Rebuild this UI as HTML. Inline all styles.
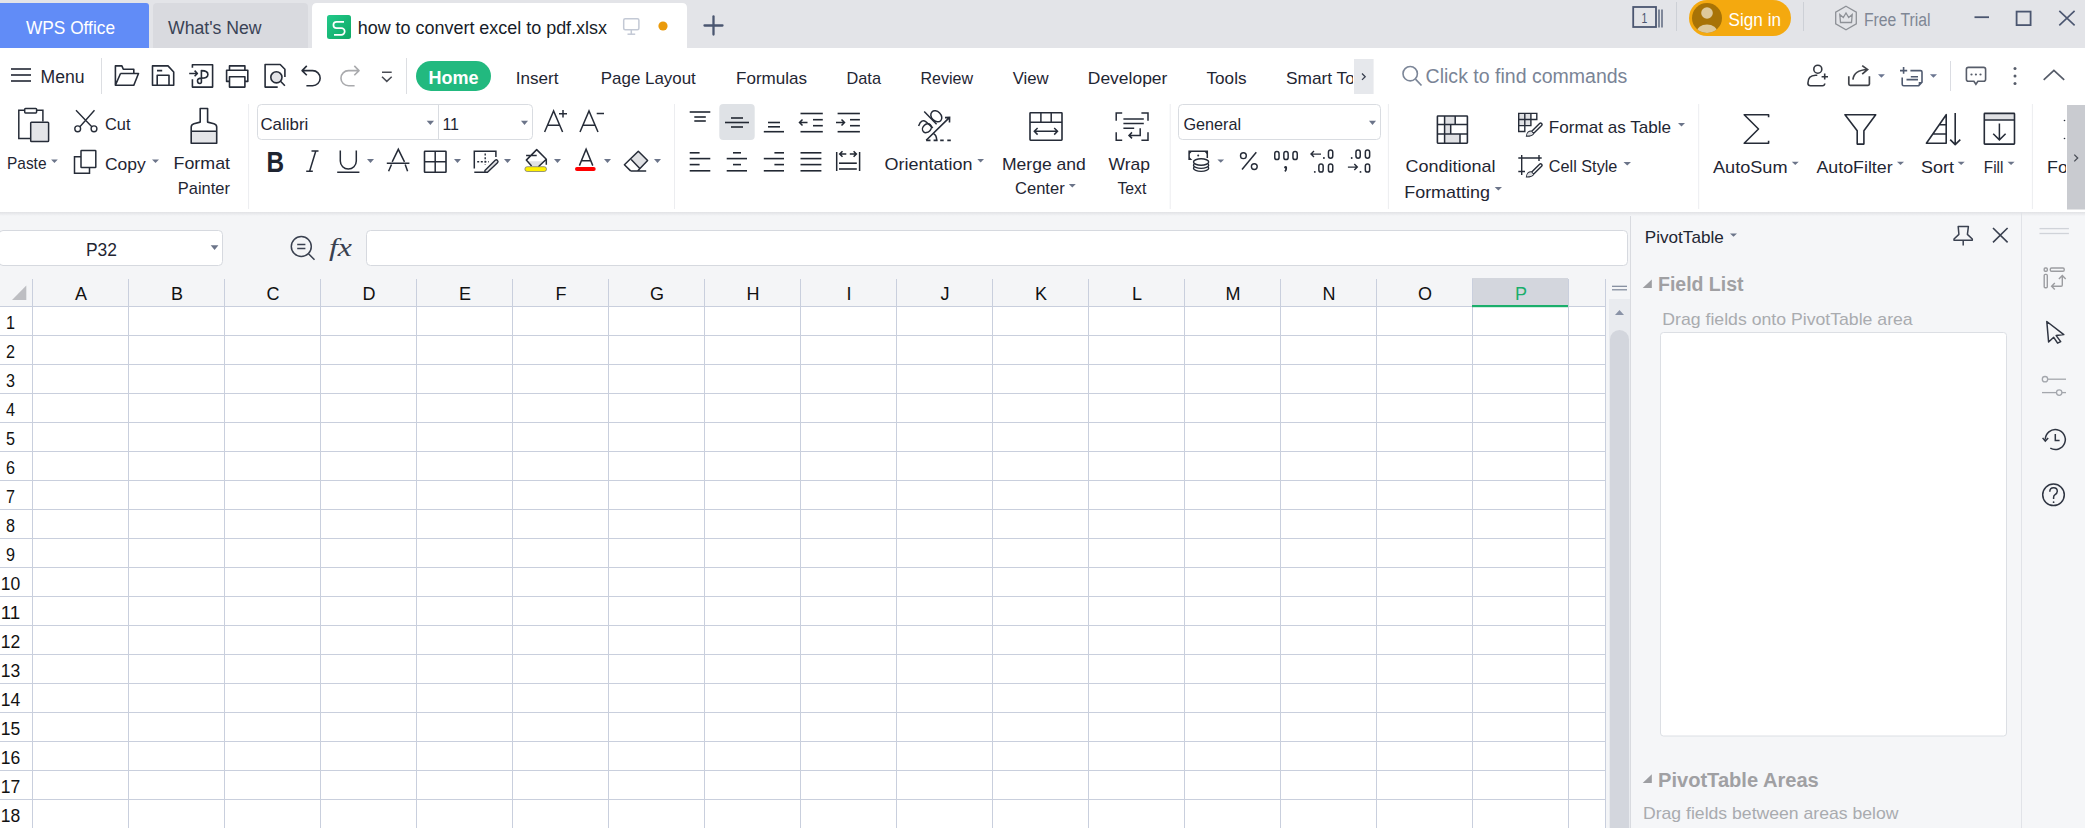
<!DOCTYPE html>
<html><head><meta charset="utf-8"><title>WPS Spreadsheet</title>
<style>html,body{margin:0;padding:0;background:#fff;overflow:hidden}svg{display:block;font-family:"Liberation Sans",sans-serif}</style>
</head><body>
<svg width="2085" height="828" viewBox="0 0 2085 828">
<rect x="0" y="0" width="2085" height="48" fill="#E3E4E8" />
<path d="M0,3H146Q149,3 149,6V48H0Z" fill="#618CF7" />
<text x="26" y="34" font-size="18" fill="#FFFFFF" textLength="89" lengthAdjust="spacingAndGlyphs" >WPS Office</text>
<path d="M153,48V7Q153,3 157,3H304Q308,3 308,7V48Z" fill="#D9DADF" />
<text x="168" y="34" font-size="18" fill="#3A4356" textLength="93.5" lengthAdjust="spacingAndGlyphs" >What&#x27;s New</text>
<path d="M312,48V8Q312,3 317,3H682Q687,3 687,8V48Z" fill="#FFFFFF" />
<defs><linearGradient id="gS" x1="0" y1="0" x2="1" y2="1"><stop offset="0" stop-color="#22C98A"/><stop offset="1" stop-color="#0FA865"/></linearGradient><clipPath id="cAv"><circle cx="1707" cy="18" r="15"/></clipPath><clipPath id="cTabs"><rect x="1280" y="50" width="73" height="50"/></clipPath><clipPath id="cFo"><rect x="2040" y="100" width="26" height="110"/></clipPath></defs>
<rect x="327" y="15" width="24" height="24" fill="url(#gS)" rx="2.5" />
<path d="M344,21.8H336.6A3.2,3.2 0 0 0 336.6,28.2H341.4A3.3,3.3 0 0 1 341.4,34.8H334" fill="none" stroke="#FFFFFF" stroke-width="1.7" />
<text x="357.7" y="34" font-size="18" fill="#161C28" textLength="249.3" lengthAdjust="spacingAndGlyphs" >how to convert excel to pdf.xlsx</text>
<rect x="623.7" y="18.7" width="15.2" height="11" fill="none" rx="1.5" stroke="#C3C9D5" stroke-width="1.5" />
<line x1="631.3" y1="29.7" x2="631.3" y2="34.2" stroke="#C3C9D5" stroke-width="1.5" />
<line x1="627.5" y1="34.2" x2="635.2" y2="34.2" stroke="#C3C9D5" stroke-width="1.5" />
<circle cx="663" cy="26" r="4.6" fill="#EA9A0B" />
<line x1="704.5" y1="25.5" x2="722.5" y2="25.5" stroke="#4B5670" stroke-width="2.3" stroke-linecap="round" />
<line x1="713.5" y1="16.5" x2="713.5" y2="34.5" stroke="#4B5670" stroke-width="2.3" stroke-linecap="round" />
<rect x="1633.2" y="7" width="22.8" height="20" fill="none" stroke="#4B5670" stroke-width="1.8" />
<text x="1644.5" y="23.2" font-size="15" fill="#4B5670" text-anchor="middle" textLength="5.8" lengthAdjust="spacingAndGlyphs" >1</text>
<line x1="1659" y1="9.5" x2="1659" y2="27.5" stroke="#4B5670" stroke-width="1.3" />
<line x1="1662" y1="9.5" x2="1662" y2="27.5" stroke="#4B5670" stroke-width="1.3" />
<line x1="1676.5" y1="2" x2="1676.5" y2="31" stroke="#CDD0D6" stroke-width="1" />
<rect x="1689" y="0" width="102" height="36" fill="#F4A90F" rx="18" />
<circle cx="1707" cy="18" r="15" fill="#A87306" />
<circle cx="1707" cy="13" r="5.8" fill="#DEC99B" />
<ellipse cx="1707" cy="32.5" rx="10.5" ry="8" fill="#DEC99B" clip-path="url(#cAv)"/>
<text x="1728.6" y="25.6" font-size="18" fill="#FFFFFF" textLength="52.4" lengthAdjust="spacingAndGlyphs" >Sign in</text>
<line x1="1803.5" y1="2" x2="1803.5" y2="31" stroke="#CDD0D6" stroke-width="1" />
<path d="M1846,6.2L1856.3,12.1V23.9L1846,29.8L1835.7,23.9V12.1Z" fill="none" stroke="#8E9197" stroke-width="1.3" />
<path d="M1840.5,22.5L1839.8,14.5L1843.3,17.5L1846,13L1848.7,17.5L1852.2,14.5L1851.5,22.5Z" fill="none" stroke="#8E9197" stroke-width="1.3" />
<text x="1864" y="25.6" font-size="18" fill="#7F8795" textLength="66.5" lengthAdjust="spacingAndGlyphs" >Free Trial</text>
<line x1="1974.5" y1="17.2" x2="1989" y2="17.2" stroke="#4B5670" stroke-width="1.8" />
<rect x="2016.6" y="11.6" width="14" height="13.5" fill="none" stroke="#4B5670" stroke-width="1.8" />
<line x1="2059.3" y1="10.8" x2="2074.6" y2="25.4" stroke="#4B5670" stroke-width="1.6" />
<line x1="2074.6" y1="10.8" x2="2059.3" y2="25.4" stroke="#4B5670" stroke-width="1.6" />
<line x1="11" y1="69" x2="31" y2="69" stroke="#3A3F4A" stroke-width="1.8" />
<line x1="11" y1="75" x2="31" y2="75" stroke="#3A3F4A" stroke-width="1.8" />
<line x1="11" y1="81" x2="31" y2="81" stroke="#3A3F4A" stroke-width="1.8" />
<text x="40.5" y="83" font-size="18" fill="#1F2633" textLength="44" lengthAdjust="spacingAndGlyphs" >Menu</text>
<line x1="101.5" y1="58" x2="101.5" y2="94" stroke="#DCDEE2" stroke-width="1" />
<path d="M115.4,85.3V65.9H121.9L123.3,69.2H133.8V73.5 M120.5,73.5H138.5L133.8,85.3H115.4L120.5,73.5" fill="none" stroke="#262C38" stroke-width="1.6" stroke-linejoin="round"/>
<path d="M152.5,65.9H168L173.7,72V85.3H152.5Z M157,70.6H162.2 M157.2,85.3V75.3H169V85.3" fill="none" stroke="#262C38" stroke-width="1.6" stroke-linejoin="round"/>
<path d="M192.4,67.7V64.8H212.6V87.1H192.4V79.2 M189.2,73.5H197.4 M194.6,70.6L197.4,73.5L194.6,76.3 M201.4,82.5V70.6Q207.9,70.6 207.9,74.4Q207.9,78.1 201.4,78.1Q197.5,78.1 197.5,80.8Q197.5,83.5 200,83.5Q201.4,83.5 201.4,81.5" fill="none" stroke="#262C38" stroke-width="1.6" stroke-linejoin="round"/>
<path d="M229.5,70.2V65.9H244.9V70.2 M229.5,81.4H226.6V70.2H247.8V81.4H244.9 M229.5,76.7H244.9V87.1H229.5Z" fill="none" stroke="#262C38" stroke-width="1.6" stroke-linejoin="round"/>
<circle cx="276.4" cy="77.3" r="5.6" fill="#E3E4E8" stroke="#262C38" stroke-width="1.6" />
<path d="M277.7,87.1H265.1V64.5H280.2L284.9,69.2V77.1 M280.5,81.3L284.9,85.7" fill="none" stroke="#262C38" stroke-width="1.6" stroke-linejoin="round"/>
<path d="M306.8,65.9L302.1,70.6L306.8,75.3 M302.1,70.6H312.6A7.55,7.55 0 0 1 312.6,85.7H306.4" fill="none" stroke="#262C38" stroke-width="1.6" stroke-linejoin="round"/>
<path d="M354.3,65.9L359,70.6L354.3,75.3 M359,70.6H348.5A7.55,7.55 0 0 0 348.5,85.7H354.6" fill="none" stroke="#A9AAAD" stroke-width="1.6" stroke-linejoin="round"/>
<path d="M382,72.2H391.7 M382,76.7L386.8,81.4L391.7,76.7" fill="none" stroke="#4A4D55" stroke-width="1.5" />
<line x1="406.5" y1="58" x2="406.5" y2="94" stroke="#DCDEE2" stroke-width="1" />
<rect x="416" y="61" width="75" height="30" fill="#22B97F" rx="15" />
<text x="453.5" y="84" font-size="18" fill="#FFFFFF" font-weight="700" text-anchor="middle" textLength="50" lengthAdjust="spacingAndGlyphs" >Home</text>
<text x="515.7" y="84.2" font-size="17" fill="#1F2633" textLength="42.8" lengthAdjust="spacingAndGlyphs" >Insert</text>
<text x="600.8" y="84.2" font-size="17" fill="#1F2633" textLength="95" lengthAdjust="spacingAndGlyphs" >Page Layout</text>
<text x="736" y="84.2" font-size="17" fill="#1F2633" textLength="71" lengthAdjust="spacingAndGlyphs" >Formulas</text>
<text x="846.5" y="84.2" font-size="17" fill="#1F2633" textLength="34.5" lengthAdjust="spacingAndGlyphs" >Data</text>
<text x="920.4" y="84.2" font-size="17" fill="#1F2633" textLength="52.6" lengthAdjust="spacingAndGlyphs" >Review</text>
<text x="1012.7" y="84.2" font-size="17" fill="#1F2633" textLength="36" lengthAdjust="spacingAndGlyphs" >View</text>
<text x="1087.8" y="84.2" font-size="17" fill="#1F2633" textLength="79.6" lengthAdjust="spacingAndGlyphs" >Developer</text>
<text x="1206.5" y="84.2" font-size="17" fill="#1F2633" textLength="40" lengthAdjust="spacingAndGlyphs" >Tools</text>
<g clip-path="url(#cTabs)">
<text x="1286" y="84.2" font-size="17" fill="#1F2633" textLength="91" lengthAdjust="spacingAndGlyphs" >Smart Tools</text>
</g>
<rect x="1354" y="59" width="19.6" height="35" fill="#E6E8EC" />
<path d="M1362,73.5L1365.2,76.7L1362,79.9" fill="none" stroke="#3A4050" stroke-width="1.3" />
<circle cx="1410.2" cy="73.7" r="7.2" fill="none" stroke="#7C8698" stroke-width="1.6" />
<line x1="1415.5" y1="79.2" x2="1421.5" y2="85.5" stroke="#7C8698" stroke-width="1.7" />
<text x="1425.6" y="82.7" font-size="19.5" fill="#7A8496" textLength="201.8" lengthAdjust="spacingAndGlyphs" >Click to find commands</text>
<circle cx="1817.8" cy="69.2" r="4" fill="none" stroke="#333740" stroke-width="1.6" />
<path d="M1817.3,75.3H1815.5Q1808,75.5 1807.9,83.2Q1808,85.7 1810.5,85.7H1822.5Q1824.5,85.7 1824.8,83.5 M1821.6,76.7H1828 M1824.7,73.5V79.6" fill="none" stroke="#333740" stroke-width="1.6" />
<path d="M1848.8,76.3V84Q1848.8,85.3 1850.1,85.3H1868.1Q1869.4,85.3 1869.4,84V76.3 M1852.9,79.6Q1854,70 1867.6,69.5 M1862.2,65.6L1867.6,69.5L1862.2,74.2" fill="none" stroke="#404349" stroke-width="1.7" />
<path d="M1878,74.2H1884.9L1881.45,77.8Z" fill="#6A7590"/>
<path d="M1900,70.6H1907.2 M1903.6,67V73.8 M1910.4,70.6H1920.5Q1922,70.6 1922,72.1V82.1L1918.7,85.7H1903.7Q1902.2,85.7 1902.2,84.2V77.4 M1910.8,76.8H1918 M1906.5,79.6H1918" fill="none" stroke="#505B70" stroke-width="1.6" />
<path d="M1922,82.1L1918.7,85.7V82.1Z" fill="#505B70" />
<path d="M1929.9,74.2H1937L1933.45,77.8Z" fill="#6A7590"/>
<line x1="1950.5" y1="61" x2="1950.5" y2="91" stroke="#DADCE2" stroke-width="1" />
<path d="M1968.4,67.4H1983.6Q1985.6,67.4 1985.6,69.4V79.2Q1985.6,81.2 1983.6,81.2H1977.9L1975.9,84.2L1973.9,81.2H1968.4Q1966.4,81.2 1966.4,79.2V69.4Q1966.4,67.4 1968.4,67.4Z" fill="none" stroke="#575D6A" stroke-width="1.6" />
<circle cx="1971.5" cy="74.5" r="1.1" fill="#575D6A" />
<circle cx="1975.9" cy="74.5" r="1.1" fill="#575D6A" />
<circle cx="1980.5" cy="74.5" r="1.1" fill="#575D6A" />
<circle cx="2015" cy="68.4" r="1.5" fill="#575D6A" />
<circle cx="2015" cy="76" r="1.5" fill="#575D6A" />
<circle cx="2015" cy="83.5" r="1.5" fill="#575D6A" />
<path d="M2043.7,79.8L2053.9,70.4L2064.2,79.8" fill="none" stroke="#555B68" stroke-width="1.7" />
<line x1="248.6" y1="104" x2="248.6" y2="209" stroke="#ECEDF0" stroke-width="1" />
<line x1="674.5" y1="104" x2="674.5" y2="209" stroke="#ECEDF0" stroke-width="1" />
<line x1="1170.2" y1="104" x2="1170.2" y2="209" stroke="#ECEDF0" stroke-width="1" />
<line x1="1388.4" y1="104" x2="1388.4" y2="209" stroke="#ECEDF0" stroke-width="1" />
<line x1="1698.7" y1="104" x2="1698.7" y2="209" stroke="#ECEDF0" stroke-width="1" />
<line x1="2032.4" y1="104" x2="2032.4" y2="209" stroke="#ECEDF0" stroke-width="1" />
<path d="M30.6,138.4H18.8V110.3H42.9V121.4" fill="none" stroke="#262C38" stroke-width="1.5" />
<rect x="24.7" y="108.5" width="11.9" height="4.4" fill="#FFFFFF" rx="0.8" stroke="#262C38" stroke-width="1.5" />
<rect x="30.7" y="122.3" width="17.9" height="19.2" fill="#E4E5E8" rx="0.8" stroke="#262C38" stroke-width="1.5" />
<text x="7" y="169.4" font-size="17" fill="#1F2633" textLength="39.5" lengthAdjust="spacingAndGlyphs" >Paste</text>
<path d="M51.1,159.4H57.8L54.45,163Z" fill="#6B7489"/>
<path d="M76,110.3L91.8,126.7 M94.5,110.3L79.9,126.7" fill="none" stroke="#262C38" stroke-width="1.4" />
<circle cx="77.7" cy="128.8" r="2.9" fill="#FFFFFF" stroke="#262C38" stroke-width="1.4" />
<circle cx="94" cy="128.8" r="2.9" fill="#FFFFFF" stroke="#262C38" stroke-width="1.4" />
<text x="105" y="130" font-size="17" fill="#1F2633" textLength="25.5" lengthAdjust="spacingAndGlyphs" >Cut</text>
<rect x="81" y="150.5" width="14.8" height="17" fill="#FFFFFF" rx="0.6" stroke="#262C38" stroke-width="1.5" />
<path d="M81,156.7H74.5V173.3H89.5V167.5" fill="none" stroke="#262C38" stroke-width="1.5" />
<text x="105" y="169.5" font-size="17" fill="#1F2633" textLength="40.8" lengthAdjust="spacingAndGlyphs" >Copy</text>
<path d="M152,159.4H159L155.5,163Z" fill="#6B7489"/>
<rect x="191.2" y="131.2" width="25.5" height="12.1" fill="#E4E5E8" />
<path d="M200.2,122.1V108.5H207.6V122.1L214,123.7Q216.7,124.6 216.7,127V143.3H191.2V127Q191.2,124.6 193.9,123.7L200.2,122.1Z M191.2,131.2H216.7" fill="none" stroke="#262C38" stroke-width="1.6" stroke-linejoin="round"/>
<text x="173.6" y="169.4" font-size="17" fill="#1F2633" textLength="56.4" lengthAdjust="spacingAndGlyphs" >Format</text>
<text x="177.8" y="194.4" font-size="17" fill="#1F2633" textLength="52.2" lengthAdjust="spacingAndGlyphs" >Painter</text>
<rect x="257.5" y="104.5" width="275" height="35" fill="#FFFFFF" rx="4" stroke="#D9DCE1" stroke-width="1" />
<line x1="438.5" y1="105" x2="438.5" y2="139" stroke="#D9DCE1" stroke-width="1" />
<text x="260.4" y="129.6" font-size="17" fill="#1F2633" textLength="47.9" lengthAdjust="spacingAndGlyphs" >Calibri</text>
<path d="M426.7,120.8H434L430.35,125Z" fill="#6B7489"/>
<text x="442.4" y="129.6" font-size="17" fill="#1F2633" textLength="16.6" lengthAdjust="spacingAndGlyphs" >11</text>
<path d="M521,120.8H528L524.5,125Z" fill="#6B7489"/>
<path d="M544.6,132L553.6,111L562.6,132 M547.6,125.2H559.6 M559,113.7H567 M563,110V117.4" fill="none" stroke="#262C38" stroke-width="1.5" />
<path d="M580,132L589,111L598,132 M583,125.2H595 M596.7,113.6H604" fill="none" stroke="#262C38" stroke-width="1.5" />
<text x="266.6" y="171.5" font-size="29.3" fill="#1E2430" font-weight="700" textLength="17.6" lengthAdjust="spacingAndGlyphs" >B</text>
<path d="M315.8,151L309.6,171.3 M311.5,151H318.5 M306.2,171.3H312.8" fill="none" stroke="#262C38" stroke-width="1.5" />
<path d="M340.3,150.5V161A8,8 0 0 0 356.3,161V150.5 M337.2,172.3H359.4" fill="none" stroke="#262C38" stroke-width="1.5" />
<path d="M367,159H374L370.5,163Z" fill="#6B7489"/>
<path d="M388.6,171.3L391.5,164.5 M392.2,161.8L398.3,149.3L404.5,161.8 M405.2,164.5L407.6,171.3 M386.8,163.2H409.4" fill="none" stroke="#262C38" stroke-width="1.5" />
<rect x="424.5" y="151.2" width="21.5" height="21" fill="none" rx="0.5" stroke="#262C38" stroke-width="1.6" />
<path d="M435.2,151.2V172.2 M424.5,161.7H446" fill="none" stroke="#262C38" stroke-width="1.5" />
<path d="M454,159H461L457.5,163Z" fill="#6B7489"/>
<path d="M474.3,168.5V151.2H495.9V157 M474.3,172.3H486.8" fill="none" stroke="#262C38" stroke-width="1.5" />
<path d="M477.2,161.8H488.7 M485.2,153.6V165.1" fill="none" stroke="#262C38" stroke-width="1.4" stroke-dasharray="2,1.6"/>
<path d="M484.9,170.4L495.2,160.3Q496.4,159.3 497.5,160.4Q498.6,161.6 497.5,162.7L487.5,172.3H484.9Z" fill="#E0E1E4" stroke="#262C38" stroke-width="1.4" stroke-linejoin="round"/>
<path d="M504,159H511L507.5,163Z" fill="#6B7489"/>
<path d="M531.4,165.8L526.3,160.1L536.7,149.6L546.3,159.2L538.6,166.5Z" fill="#FFFFFF" />
<path d="M527.3,161.3H545.1L538.6,166.5H531.4Z" fill="#E0E1E4" />
<path d="M531.6,166L526.3,160.1L536.7,149.6L546.3,159.2L538.4,166.8 M526.1,155.6H536.7 M546.3,159.2V164.7" fill="none" stroke="#262C38" stroke-width="1.5" stroke-linejoin="round"/>
<rect x="524.9" y="166.7" width="21.6" height="4.8" fill="#FFF000" rx="2.3" stroke="#6E6E6E" stroke-width="0.7" />
<path d="M554,159H561L557.5,163Z" fill="#6B7489"/>
<path d="M579.4,165.6L586.1,149.3L592.8,165.6 M581.8,160.8H590.4" fill="none" stroke="#262C38" stroke-width="1.5" />
<rect x="575" y="167" width="20.7" height="3.9" fill="#FF0000" rx="1.95" />
<path d="M604,159H611L607.5,163Z" fill="#6B7489"/>
<path d="M638.3,151.2L647.6,160.5L640.1,168.2L631.2,159.6Z" fill="#E0E1E4" />
<path d="M630.6,170.9L624.4,164.7L638.3,151.2L647.6,160.5L637.6,170.9 M630.6,170.9H646.2 M631.2,159.6L639.8,168.5" fill="none" stroke="#262C38" stroke-width="1.5" stroke-linejoin="round"/>
<path d="M654,159H661L657.5,163Z" fill="#6B7489"/>
<rect x="719.3" y="104" width="35.4" height="36" fill="#DFE2E6" rx="4" />
<line x1="689.7" y1="112" x2="710.3" y2="112" stroke="#222833" stroke-width="1.6" />
<line x1="694.3" y1="117" x2="705.8" y2="117" stroke="#222833" stroke-width="1.6" />
<line x1="694.3" y1="121" x2="705.8" y2="121" stroke="#222833" stroke-width="1.6" />
<line x1="731" y1="118" x2="743" y2="118" stroke="#222833" stroke-width="1.6" />
<line x1="725" y1="122.5" x2="749" y2="122.5" stroke="#222833" stroke-width="1.6" />
<line x1="731" y1="127" x2="743" y2="127" stroke="#222833" stroke-width="1.6" />
<line x1="768" y1="122.5" x2="780" y2="122.5" stroke="#222833" stroke-width="1.6" />
<line x1="768" y1="126.8" x2="780" y2="126.8" stroke="#222833" stroke-width="1.6" />
<line x1="763.8" y1="131.7" x2="784" y2="131.7" stroke="#222833" stroke-width="1.6" />
<line x1="800.5" y1="113.5" x2="822.8" y2="113.5" stroke="#222833" stroke-width="1.6" />
<line x1="813" y1="119.7" x2="822.8" y2="119.7" stroke="#222833" stroke-width="1.6" />
<line x1="813" y1="125.7" x2="822.8" y2="125.7" stroke="#222833" stroke-width="1.6" />
<line x1="800.5" y1="131.7" x2="822.8" y2="131.7" stroke="#222833" stroke-width="1.6" />
<path d="M799.5,122.5H807.5 M802.5,119.5L799.5,122.5L802.5,125.5" fill="none" stroke="#222833" stroke-width="1.5" />
<line x1="837.6" y1="113.5" x2="859.9" y2="113.5" stroke="#222833" stroke-width="1.6" />
<line x1="850" y1="119.7" x2="859.9" y2="119.7" stroke="#222833" stroke-width="1.6" />
<line x1="850" y1="125.7" x2="859.9" y2="125.7" stroke="#222833" stroke-width="1.6" />
<line x1="837.6" y1="131.7" x2="859.9" y2="131.7" stroke="#222833" stroke-width="1.6" />
<path d="M836,122.5H844.5 M841.5,119.5L844.5,122.5L841.5,125.5" fill="none" stroke="#222833" stroke-width="1.5" />
<line x1="689.7" y1="152.8" x2="699.6" y2="152.8" stroke="#222833" stroke-width="1.6" />
<line x1="733" y1="152.8" x2="741" y2="152.8" stroke="#222833" stroke-width="1.6" />
<line x1="774.4" y1="152.8" x2="784" y2="152.8" stroke="#222833" stroke-width="1.6" />
<line x1="800.5" y1="152.8" x2="821.4" y2="152.8" stroke="#222833" stroke-width="1.6" />
<line x1="689.7" y1="158.6" x2="710.3" y2="158.6" stroke="#222833" stroke-width="1.6" />
<line x1="726.7" y1="158.6" x2="747" y2="158.6" stroke="#222833" stroke-width="1.6" />
<line x1="763.8" y1="158.6" x2="784" y2="158.6" stroke="#222833" stroke-width="1.6" />
<line x1="800.5" y1="158.6" x2="821.4" y2="158.6" stroke="#222833" stroke-width="1.6" />
<line x1="689.7" y1="164.6" x2="699.6" y2="164.6" stroke="#222833" stroke-width="1.6" />
<line x1="733" y1="164.6" x2="741" y2="164.6" stroke="#222833" stroke-width="1.6" />
<line x1="774.4" y1="164.6" x2="784" y2="164.6" stroke="#222833" stroke-width="1.6" />
<line x1="800.5" y1="164.6" x2="821.4" y2="164.6" stroke="#222833" stroke-width="1.6" />
<line x1="689.7" y1="170.8" x2="710.3" y2="170.8" stroke="#222833" stroke-width="1.6" />
<line x1="726.7" y1="170.8" x2="747" y2="170.8" stroke="#222833" stroke-width="1.6" />
<line x1="763.8" y1="170.8" x2="784" y2="170.8" stroke="#222833" stroke-width="1.6" />
<line x1="800.5" y1="170.8" x2="821.4" y2="170.8" stroke="#222833" stroke-width="1.6" />
<path d="M836.7,152V171 M859.6,152V171 M839.7,154H846.3 M849.8,154H856.4 M842.5,151.2L839.7,154L842.5,156.8 M853.6,151.2L856.4,154L853.6,156.8" fill="none" stroke="#222833" stroke-width="1.5" />
<line x1="839" y1="163.2" x2="856.8" y2="163.2" stroke="#222833" stroke-width="1.6" />
<line x1="839" y1="169" x2="856.8" y2="169" stroke="#222833" stroke-width="1.6" />
<path d="M926.2,140.3L949.6,117.4 M945,117.6L949.6,117.4L949.5,122.5" fill="none" stroke="#262C38" stroke-width="1.6" />
<path d="M933.6,133.7Q936.8,135.5 936.6,140.3" fill="none" stroke="#262C38" stroke-width="1.5" />
<path d="M926.2,140.3H930.5 M933.6,140.3H937.6 M940.2,140.3H943.7 M947.3,140.3H950.8" fill="none" stroke="#262C38" stroke-width="1.8" />
<path d="M924.2,111.6L936.6,124.3" fill="none" stroke="#262C38" stroke-width="1.5" />
<ellipse cx="0" cy="0" rx="6.2" ry="4.7" fill="none" stroke="#262C38" stroke-width="1.5" transform="translate(936.3,116.3) rotate(45)"/>
<path d="M918.6,125.9Q921.5,118.5 926,121.8L932.8,127.9" fill="none" stroke="#262C38" stroke-width="1.5" />
<ellipse cx="0" cy="0" rx="4.9" ry="3.9" fill="none" stroke="#262C38" stroke-width="1.5" transform="translate(926.9,128.2) rotate(-45)"/>
<text x="884.6" y="169.5" font-size="17" fill="#1F2633" textLength="88" lengthAdjust="spacingAndGlyphs" >Orientation</text>
<path d="M977.3,159H984L980.65,162.4Z" fill="#6B7489"/>
<rect x="1030" y="112.7" width="32" height="27.5" fill="none" rx="0.6" stroke="#262C38" stroke-width="1.6" />
<path d="M1030,122.2H1062 M1040.9,112.7V122.2 M1051.2,112.7V122.2 M1034.3,131.3H1057.5 M1037.6,128L1034.3,131.3L1037.6,134.6 M1054.2,128L1057.5,131.3L1054.2,134.6" fill="none" stroke="#262C38" stroke-width="1.5" />
<text x="1002" y="169.5" font-size="17" fill="#1F2633" textLength="83.8" lengthAdjust="spacingAndGlyphs" >Merge and</text>
<text x="1015" y="194.4" font-size="17" fill="#1F2633" textLength="49.7" lengthAdjust="spacingAndGlyphs" >Center</text>
<path d="M1068.8,184H1075.8L1072.3,187.5Z" fill="#6B7489"/>
<path d="M1116.2,120.8V113H1122.2 M1141.4,113H1148V120.8 M1116.2,132.2V140.2H1122.2 M1141.4,140.2H1148V132.2" fill="none" stroke="#262C38" stroke-width="1.5" />
<path d="M1123.4,119H1143.8 M1123.4,123.4H1143.8 M1123.4,128.2H1134.2 M1140.2,128.2V135.4H1129 M1132,132.4L1129,135.4L1132,138.4" fill="none" stroke="#262C38" stroke-width="1.5" />
<text x="1108.5" y="169.5" font-size="17" fill="#1F2633" textLength="41.5" lengthAdjust="spacingAndGlyphs" >Wrap</text>
<text x="1117.4" y="194.4" font-size="17" fill="#1F2633" textLength="29" lengthAdjust="spacingAndGlyphs" >Text</text>
<rect x="1178.5" y="104.5" width="202" height="35" fill="#FFFFFF" rx="4" stroke="#D9DCE1" stroke-width="1" />
<text x="1183.5" y="129.5" font-size="17" fill="#1F2633" textLength="57.6" lengthAdjust="spacingAndGlyphs" >General</text>
<path d="M1369,120.8H1376L1372.5,125Z" fill="#6B7489"/>
<path d="M1189.1,159.9V151.2H1207.3V158" fill="none" stroke="#262C38" stroke-width="1.5" />
<circle cx="1198.2" cy="155.4" r="1" fill="#262C38" />
<path d="M1189.1,151.2H1192.3L1189.1,154.4Z M1207.3,151.2H1204.1L1207.3,154.4Z M1189.1,159.9V156.7L1192.3,159.9Z" fill="#262C38" />
<ellipse cx="1201.1" cy="168.2" rx="7.6" ry="3.2" fill="#FFFFFF" stroke="#262C38" stroke-width="1.4"/>
<ellipse cx="1201.1" cy="165.2" rx="7.6" ry="3.2" fill="#FFFFFF" stroke="#262C38" stroke-width="1.4"/>
<ellipse cx="1201.1" cy="162" rx="7.6" ry="3.2" fill="#FFFFFF" stroke="#262C38" stroke-width="1.4"/>
<path d="M1217.4,159.4H1224.1L1220.75,162.7Z" fill="#6B7489"/>
<circle cx="1243.4" cy="155.7" r="2.9" fill="none" stroke="#262C38" stroke-width="1.4" />
<circle cx="1254.3" cy="166.6" r="2.9" fill="none" stroke="#262C38" stroke-width="1.4" />
<line x1="1242" y1="169.5" x2="1256.3" y2="152.2" stroke="#262C38" stroke-width="1.5" />
<rect x="1274.75" y="151.55" width="4.2999999999999545" height="8.0" fill="none" rx="2.1499999999999773" stroke="#262C38" stroke-width="1.5" />
<rect x="1283.85" y="151.55" width="4.2999999999999545" height="8.0" fill="none" rx="2.1499999999999773" stroke="#262C38" stroke-width="1.5" />
<rect x="1292.95" y="151.55" width="4.2999999999999545" height="8.0" fill="none" rx="2.1499999999999773" stroke="#262C38" stroke-width="1.5" />
<path d="M1286.2,167V168.8Q1286,170.4 1284.8,171.4" fill="none" stroke="#262C38" stroke-width="1.7" />
<circle cx="1285.6" cy="167.3" r="1.35" fill="#262C38" />
<path d="M1311,154.1H1321 M1314,151.1L1311,154.1L1314,157.1" fill="none" stroke="#262C38" stroke-width="1.4" />
<circle cx="1323.9" cy="158" r="0.95" fill="#262C38" />
<rect x="1328.45" y="150.05" width="4.2999999999999545" height="8.099999999999994" fill="none" rx="2.1499999999999773" stroke="#262C38" stroke-width="1.5" />
<circle cx="1314.8" cy="171.9" r="0.95" fill="#262C38" />
<rect x="1318.85" y="163.95" width="4.300000000000182" height="8.100000000000023" fill="none" rx="2.150000000000091" stroke="#262C38" stroke-width="1.5" />
<rect x="1328.45" y="163.95" width="4.2999999999999545" height="8.100000000000023" fill="none" rx="2.1499999999999773" stroke="#262C38" stroke-width="1.5" />
<circle cx="1351.7" cy="158" r="0.95" fill="#262C38" />
<rect x="1355.95" y="150.05" width="4.2999999999999545" height="8.099999999999994" fill="none" rx="2.1499999999999773" stroke="#262C38" stroke-width="1.5" />
<rect x="1365.35" y="150.05" width="4.300000000000182" height="8.099999999999994" fill="none" rx="2.150000000000091" stroke="#262C38" stroke-width="1.5" />
<path d="M1347.9,167.1H1357.3 M1354.3,164.1L1357.3,167.1L1354.3,170.1" fill="none" stroke="#262C38" stroke-width="1.4" />
<circle cx="1360.5" cy="171.9" r="0.95" fill="#262C38" />
<rect x="1365.35" y="163.95" width="4.300000000000182" height="8.100000000000023" fill="none" rx="2.150000000000091" stroke="#262C38" stroke-width="1.5" />
<rect x="1444.6" y="116" width="10.6" height="8.5" fill="#E0E1E4" />
<rect x="1444.6" y="124.5" width="6.1" height="9.4" fill="#E0E1E4" />
<rect x="1444.6" y="133.9" width="15.4" height="9.3" fill="#E0E1E4" />
<rect x="1437.4" y="116" width="30" height="27.2" fill="none" rx="0.6" stroke="#262C38" stroke-width="1.6" />
<path d="M1437.4,124.5H1467.4 M1437.4,133.9H1467.4 M1444.6,116V143.2 M1455.2,116V124.5 M1450.7,124.5V133.9 M1460,133.9V143.2" fill="none" stroke="#262C38" stroke-width="1.5" />
<text x="1405.4" y="172.4" font-size="17" fill="#1F2633" textLength="90" lengthAdjust="spacingAndGlyphs" >Conditional</text>
<text x="1404.2" y="197.9" font-size="17" fill="#1F2633" textLength="85.8" lengthAdjust="spacingAndGlyphs" >Formatting</text>
<path d="M1494.7,187H1502L1498.35,190.5Z" fill="#6B7489"/>
<rect x="1518.7" y="113.4" width="12.2" height="12.2" fill="#E0E1E4" />
<path d="M1518.7,131.5V113.4H1536.8V119.5H1530.9V125.6H1524.8V131.5Z M1518.7,119.5H1530.9 M1518.7,125.6H1524.8 M1524.8,113.4V125.6 M1530.9,113.4V119.5" fill="none" stroke="#262C38" stroke-width="1.4" />
<path d="M1531.5,131.5L1539.6,123.4Q1540.6,122.4 1541.6,123.4Q1542.6,124.4 1541.6,125.4L1533.5,133.5 M1531.3,131.2Q1527.5,131 1526.6,136Q1531.8,136.1 1533.5,133.5Z" fill="#FFFFFF" stroke="#262C38" stroke-width="1.4" />
<path d="M1531.3,131.5Q1527.5,131.5 1526.8,135.6Q1531.6,135.6 1533.3,133.7Z" fill="#E0E1E4" />
<text x="1548.8" y="132.5" font-size="17" fill="#1F2633" textLength="122.2" lengthAdjust="spacingAndGlyphs" >Format as Table</text>
<path d="M1678,123H1685L1681.5,126.6Z" fill="#6B7489"/>
<path d="M1518.3,158H1541.7 M1521.7,155V175 M1539,155V161 M1518.3,171.5H1525" fill="none" stroke="#262C38" stroke-width="1.4" />
<path d="M1531.5,172.3L1539.6,164.2Q1540.6,163.2 1541.6,164.2Q1542.6,165.2 1541.6,166.2L1533.5,174.3 M1531.3,172Q1527.5,171.8 1526.6,176.8Q1531.8,176.9 1533.5,174.3Z" fill="#FFFFFF" stroke="#262C38" stroke-width="1.4" />
<path d="M1531.3,172.3Q1527.5,172.3 1526.8,176.4Q1531.6,176.4 1533.3,174.5Z" fill="#E0E1E4" />
<text x="1548.8" y="172.4" font-size="17" fill="#1F2633" textLength="68.6" lengthAdjust="spacingAndGlyphs" >Cell Style</text>
<path d="M1623.5,162H1631L1627.25,165.5Z" fill="#6B7489"/>
<path d="M1768.6,117.2V114.7H1744.2L1758.5,129L1744.2,143.3H1768.6V140.7" fill="none" stroke="#262C38" stroke-width="1.6" stroke-linejoin="round"/>
<text x="1713" y="172.5" font-size="17" fill="#1F2633" textLength="74.5" lengthAdjust="spacingAndGlyphs" >AutoSum</text>
<path d="M1791.8,161.7H1798.7L1795.25,165Z" fill="#6B7489"/>
<path d="M1845,114.7H1875.7L1863.9,130.7V144.1H1857.2V130.7Z" fill="none" stroke="#262C38" stroke-width="1.6" stroke-linejoin="round"/>
<text x="1816.5" y="172.5" font-size="17" fill="#1F2633" textLength="76.1" lengthAdjust="spacingAndGlyphs" >AutoFilter</text>
<path d="M1897,161.7H1904L1900.5,165Z" fill="#6B7489"/>
<path d="M1926.4,143.3L1946.2,114.7V143.3Z M1939.2,124.8H1946.2 M1932.8,134H1946.2 M1955.2,113V144.6 M1950.2,139.6L1955.2,144.6L1960.3,139.6" fill="none" stroke="#262C38" stroke-width="1.6" stroke-linejoin="round"/>
<text x="1921" y="172.5" font-size="17" fill="#1F2633" textLength="33" lengthAdjust="spacingAndGlyphs" >Sort</text>
<path d="M1957.6,161.7H1964.7L1961.15,165Z" fill="#6B7489"/>
<rect x="1984.3" y="113.4" width="30.2" height="6.7" fill="#E0E1E4" />
<rect x="1984.3" y="113.4" width="30.2" height="30.7" fill="none" rx="0.6" stroke="#262C38" stroke-width="1.6" />
<path d="M1984.3,120.1H2014.5 M1999.4,123.4V139.9 M1993.2,133.7L1999.4,139.9L2005.6,133.7" fill="none" stroke="#262C38" stroke-width="1.5" />
<text x="1983.8" y="172.5" font-size="17" fill="#1F2633" textLength="19.6" lengthAdjust="spacingAndGlyphs" >Fill</text>
<path d="M2007.5,161.7H2014.6L2011.05,165Z" fill="#6B7489"/>
<g clip-path="url(#cFo)">
<text x="2047" y="172.5" font-size="17" fill="#1F2633" textLength="56.4" lengthAdjust="spacingAndGlyphs" >Format</text>
</g>
<circle cx="2064.5" cy="120.5" r="0.8" fill="#262C38" />
<circle cx="2064.5" cy="138.5" r="0.8" fill="#262C38" />
<rect x="2067" y="105" width="18" height="104.5" fill="#C9CBD0" />
<path d="M2074.3,154.6L2077.7,158L2074.3,161.4" fill="none" stroke="#4A4E57" stroke-width="1.3" />
<rect x="0" y="212" width="2085" height="94" fill="#F4F5F7" />
<defs><linearGradient id="gSh" x1="0" y1="0" x2="0" y2="1"><stop offset="0" stop-color="#E1E2E5"/><stop offset="1" stop-color="#F4F5F7"/></linearGradient></defs>
<rect x="0" y="212" width="2085" height="4" fill="url(#gSh)" />
<rect x="-1" y="230.5" width="223.5" height="35" fill="#FFFFFF" rx="4" stroke="#D6D9DF" stroke-width="1" />
<text x="101.5" y="255.8" font-size="18" fill="#1F2633" text-anchor="middle" textLength="31" lengthAdjust="spacingAndGlyphs" >P32</text>
<path d="M210.7,245.3H218.4L214.55,250Z" fill="#6B7489"/>
<circle cx="301.3" cy="246.5" r="10" fill="none" stroke="#3A4150" stroke-width="1.5" />
<path d="M308.5,253.7L314.5,259.8 M297.2,244.6H305.4 M297.2,248.4H305.4" fill="none" stroke="#3A4150" stroke-width="1.5" />
<text x="329" y="256" font-size="25" fill="#3A4150" textLength="23" lengthAdjust="spacingAndGlyphs" font-family="Liberation Serif" font-style="italic" >fx</text>
<rect x="366.5" y="230.5" width="1261" height="35" fill="#FFFFFF" rx="4" stroke="#D6D9DF" stroke-width="1" />
<rect x="32" y="307" width="1573" height="521" fill="#FFFFFF" />
<rect x="1472" y="278" width="96" height="28" fill="#D3D6DD" />
<line x1="32.5" y1="279" x2="32.5" y2="306" stroke="#C9CFDD" stroke-width="1" />
<line x1="128.5" y1="279" x2="128.5" y2="306" stroke="#C9CFDD" stroke-width="1" />
<line x1="224.5" y1="279" x2="224.5" y2="306" stroke="#C9CFDD" stroke-width="1" />
<line x1="320.5" y1="279" x2="320.5" y2="306" stroke="#C9CFDD" stroke-width="1" />
<line x1="416.5" y1="279" x2="416.5" y2="306" stroke="#C9CFDD" stroke-width="1" />
<line x1="512.5" y1="279" x2="512.5" y2="306" stroke="#C9CFDD" stroke-width="1" />
<line x1="608.5" y1="279" x2="608.5" y2="306" stroke="#C9CFDD" stroke-width="1" />
<line x1="704.5" y1="279" x2="704.5" y2="306" stroke="#C9CFDD" stroke-width="1" />
<line x1="800.5" y1="279" x2="800.5" y2="306" stroke="#C9CFDD" stroke-width="1" />
<line x1="896.5" y1="279" x2="896.5" y2="306" stroke="#C9CFDD" stroke-width="1" />
<line x1="992.5" y1="279" x2="992.5" y2="306" stroke="#C9CFDD" stroke-width="1" />
<line x1="1088.5" y1="279" x2="1088.5" y2="306" stroke="#C9CFDD" stroke-width="1" />
<line x1="1184.5" y1="279" x2="1184.5" y2="306" stroke="#C9CFDD" stroke-width="1" />
<line x1="1280.5" y1="279" x2="1280.5" y2="306" stroke="#C9CFDD" stroke-width="1" />
<line x1="1376.5" y1="279" x2="1376.5" y2="306" stroke="#C9CFDD" stroke-width="1" />
<line x1="1472.5" y1="279" x2="1472.5" y2="306" stroke="#C9CFDD" stroke-width="1" />
<line x1="1568.5" y1="279" x2="1568.5" y2="306" stroke="#C9CFDD" stroke-width="1" />
<line x1="1605.5" y1="279" x2="1605.5" y2="828" stroke="#C9CFDD" stroke-width="1" />
<line x1="32.5" y1="306" x2="32.5" y2="828" stroke="#C9CFDD" stroke-width="1" />
<line x1="128.5" y1="306" x2="128.5" y2="828" stroke="#C9CFDD" stroke-width="1" />
<line x1="224.5" y1="306" x2="224.5" y2="828" stroke="#C9CFDD" stroke-width="1" />
<line x1="320.5" y1="306" x2="320.5" y2="828" stroke="#C9CFDD" stroke-width="1" />
<line x1="416.5" y1="306" x2="416.5" y2="828" stroke="#C9CFDD" stroke-width="1" />
<line x1="512.5" y1="306" x2="512.5" y2="828" stroke="#C9CFDD" stroke-width="1" />
<line x1="608.5" y1="306" x2="608.5" y2="828" stroke="#C9CFDD" stroke-width="1" />
<line x1="704.5" y1="306" x2="704.5" y2="828" stroke="#C9CFDD" stroke-width="1" />
<line x1="800.5" y1="306" x2="800.5" y2="828" stroke="#C9CFDD" stroke-width="1" />
<line x1="896.5" y1="306" x2="896.5" y2="828" stroke="#C9CFDD" stroke-width="1" />
<line x1="992.5" y1="306" x2="992.5" y2="828" stroke="#C9CFDD" stroke-width="1" />
<line x1="1088.5" y1="306" x2="1088.5" y2="828" stroke="#C9CFDD" stroke-width="1" />
<line x1="1184.5" y1="306" x2="1184.5" y2="828" stroke="#C9CFDD" stroke-width="1" />
<line x1="1280.5" y1="306" x2="1280.5" y2="828" stroke="#C9CFDD" stroke-width="1" />
<line x1="1376.5" y1="306" x2="1376.5" y2="828" stroke="#C9CFDD" stroke-width="1" />
<line x1="1472.5" y1="306" x2="1472.5" y2="828" stroke="#C9CFDD" stroke-width="1" />
<line x1="1568.5" y1="306" x2="1568.5" y2="828" stroke="#C9CFDD" stroke-width="1" />
<line x1="0" y1="306.5" x2="1605" y2="306.5" stroke="#C9CFDD" stroke-width="1" />
<line x1="0" y1="335.5" x2="1605" y2="335.5" stroke="#C9CFDD" stroke-width="1" />
<line x1="0" y1="364.5" x2="1605" y2="364.5" stroke="#C9CFDD" stroke-width="1" />
<line x1="0" y1="393.5" x2="1605" y2="393.5" stroke="#C9CFDD" stroke-width="1" />
<line x1="0" y1="422.5" x2="1605" y2="422.5" stroke="#C9CFDD" stroke-width="1" />
<line x1="0" y1="451.5" x2="1605" y2="451.5" stroke="#C9CFDD" stroke-width="1" />
<line x1="0" y1="480.5" x2="1605" y2="480.5" stroke="#C9CFDD" stroke-width="1" />
<line x1="0" y1="509.5" x2="1605" y2="509.5" stroke="#C9CFDD" stroke-width="1" />
<line x1="0" y1="538.5" x2="1605" y2="538.5" stroke="#C9CFDD" stroke-width="1" />
<line x1="0" y1="567.5" x2="1605" y2="567.5" stroke="#C9CFDD" stroke-width="1" />
<line x1="0" y1="596.5" x2="1605" y2="596.5" stroke="#C9CFDD" stroke-width="1" />
<line x1="0" y1="625.5" x2="1605" y2="625.5" stroke="#C9CFDD" stroke-width="1" />
<line x1="0" y1="654.5" x2="1605" y2="654.5" stroke="#C9CFDD" stroke-width="1" />
<line x1="0" y1="683.5" x2="1605" y2="683.5" stroke="#C9CFDD" stroke-width="1" />
<line x1="0" y1="712.5" x2="1605" y2="712.5" stroke="#C9CFDD" stroke-width="1" />
<line x1="0" y1="741.5" x2="1605" y2="741.5" stroke="#C9CFDD" stroke-width="1" />
<line x1="0" y1="770.5" x2="1605" y2="770.5" stroke="#C9CFDD" stroke-width="1" />
<line x1="0" y1="799.5" x2="1605" y2="799.5" stroke="#C9CFDD" stroke-width="1" />
<line x1="0" y1="828.5" x2="1605" y2="828.5" stroke="#C9CFDD" stroke-width="1" />
<rect x="1472" y="305" width="96" height="2.2" fill="#1AAE6B" />
<text x="81.0" y="299.6" font-size="18" fill="#111111" text-anchor="middle" >A</text>
<text x="177.0" y="299.6" font-size="18" fill="#111111" text-anchor="middle" >B</text>
<text x="273.0" y="299.6" font-size="18" fill="#111111" text-anchor="middle" >C</text>
<text x="369.0" y="299.6" font-size="18" fill="#111111" text-anchor="middle" >D</text>
<text x="465.0" y="299.6" font-size="18" fill="#111111" text-anchor="middle" >E</text>
<text x="561.0" y="299.6" font-size="18" fill="#111111" text-anchor="middle" >F</text>
<text x="657.0" y="299.6" font-size="18" fill="#111111" text-anchor="middle" >G</text>
<text x="753.0" y="299.6" font-size="18" fill="#111111" text-anchor="middle" >H</text>
<text x="849.0" y="299.6" font-size="18" fill="#111111" text-anchor="middle" >I</text>
<text x="945.0" y="299.6" font-size="18" fill="#111111" text-anchor="middle" >J</text>
<text x="1041.0" y="299.6" font-size="18" fill="#111111" text-anchor="middle" >K</text>
<text x="1137.0" y="299.6" font-size="18" fill="#111111" text-anchor="middle" >L</text>
<text x="1233.0" y="299.6" font-size="18" fill="#111111" text-anchor="middle" >M</text>
<text x="1329.0" y="299.6" font-size="18" fill="#111111" text-anchor="middle" >N</text>
<text x="1425.0" y="299.6" font-size="18" fill="#111111" text-anchor="middle" >O</text>
<text x="1521.0" y="299.6" font-size="18" fill="#1AAE6B" text-anchor="middle" >P</text>
<path d="M12,300H26.3V285.6Z" fill="#BDBEC2" />
<text x="10.5" y="328.6" font-size="18" fill="#111111" text-anchor="middle" textLength="9" lengthAdjust="spacingAndGlyphs" >1</text>
<text x="10.5" y="357.6" font-size="18" fill="#111111" text-anchor="middle" textLength="9" lengthAdjust="spacingAndGlyphs" >2</text>
<text x="10.5" y="386.6" font-size="18" fill="#111111" text-anchor="middle" textLength="9" lengthAdjust="spacingAndGlyphs" >3</text>
<text x="10.5" y="415.6" font-size="18" fill="#111111" text-anchor="middle" textLength="9" lengthAdjust="spacingAndGlyphs" >4</text>
<text x="10.5" y="444.6" font-size="18" fill="#111111" text-anchor="middle" textLength="9" lengthAdjust="spacingAndGlyphs" >5</text>
<text x="10.5" y="473.6" font-size="18" fill="#111111" text-anchor="middle" textLength="9" lengthAdjust="spacingAndGlyphs" >6</text>
<text x="10.5" y="502.6" font-size="18" fill="#111111" text-anchor="middle" textLength="9" lengthAdjust="spacingAndGlyphs" >7</text>
<text x="10.5" y="531.6" font-size="18" fill="#111111" text-anchor="middle" textLength="9" lengthAdjust="spacingAndGlyphs" >8</text>
<text x="10.5" y="560.6" font-size="18" fill="#111111" text-anchor="middle" textLength="9" lengthAdjust="spacingAndGlyphs" >9</text>
<text x="10.5" y="589.6" font-size="18" fill="#111111" text-anchor="middle" textLength="19.5" lengthAdjust="spacingAndGlyphs" >10</text>
<text x="10.5" y="618.6" font-size="18" fill="#111111" text-anchor="middle" textLength="19.5" lengthAdjust="spacingAndGlyphs" >11</text>
<text x="10.5" y="647.6" font-size="18" fill="#111111" text-anchor="middle" textLength="19.5" lengthAdjust="spacingAndGlyphs" >12</text>
<text x="10.5" y="676.6" font-size="18" fill="#111111" text-anchor="middle" textLength="19.5" lengthAdjust="spacingAndGlyphs" >13</text>
<text x="10.5" y="705.6" font-size="18" fill="#111111" text-anchor="middle" textLength="19.5" lengthAdjust="spacingAndGlyphs" >14</text>
<text x="10.5" y="734.6" font-size="18" fill="#111111" text-anchor="middle" textLength="19.5" lengthAdjust="spacingAndGlyphs" >15</text>
<text x="10.5" y="763.6" font-size="18" fill="#111111" text-anchor="middle" textLength="19.5" lengthAdjust="spacingAndGlyphs" >16</text>
<text x="10.5" y="792.6" font-size="18" fill="#111111" text-anchor="middle" textLength="19.5" lengthAdjust="spacingAndGlyphs" >17</text>
<text x="10.5" y="821.6" font-size="18" fill="#111111" text-anchor="middle" textLength="19.5" lengthAdjust="spacingAndGlyphs" >18</text>
<rect x="1606" y="278" width="24" height="550" fill="#F4F5F7" />
<rect x="1609" y="299" width="21" height="529" fill="#E9EBEF" />
<line x1="1612" y1="286.3" x2="1627" y2="286.3" stroke="#7C8698" stroke-width="1.2" />
<line x1="1612" y1="289.8" x2="1627" y2="289.8" stroke="#7C8698" stroke-width="1.2" />
<path d="M1615,315H1624L1619.5,310Z" fill="#8A93A7" />
<rect x="1610" y="330" width="19" height="520" fill="#D3D6DD" rx="9.5" />
<rect x="1630" y="212" width="455" height="616" fill="#F5F6F8" />
<line x1="1630.5" y1="212" x2="1630.5" y2="828" stroke="#D9DBE0" stroke-width="1" />
<rect x="0" y="212" width="2085" height="4" fill="url(#gSh)" />
<line x1="2021.5" y1="212" x2="2021.5" y2="828" stroke="#E1E3E8" stroke-width="1" />
<text x="1644.8" y="243" font-size="17" fill="#1F2633" textLength="79" lengthAdjust="spacingAndGlyphs" >PivotTable</text>
<path d="M1730,233.6H1737L1733.5,236.8Z" fill="#6B7489"/>
<path d="M1958.2,226.6H1968.4L1967.4,234.4L1972.3,239V240.3H1954V239L1958.9,234.4Z M1963.2,240.3V245.6" fill="none" stroke="#3A4150" stroke-width="1.5" stroke-linejoin="round"/>
<path d="M1993,228L2007.6,242.4 M2007.6,228L1993,242.4" fill="none" stroke="#3A4150" stroke-width="1.6" />
<path d="M1642.7,288H1651.8V279.4Z" fill="#9D9EA2" />
<text x="1658" y="291.4" font-size="20" fill="#A0A0A3" font-weight="700" textLength="85.5" lengthAdjust="spacingAndGlyphs" >Field List</text>
<text x="1662.3" y="324.6" font-size="17" fill="#A9ABAF" textLength="250.4" lengthAdjust="spacingAndGlyphs" >Drag fields onto PivotTable area</text>
<rect x="1660.5" y="332.5" width="346" height="403.5" fill="#FFFFFF" rx="3" stroke="#DCDFE4" stroke-width="1" />
<path d="M1642.7,783H1651.8V774.2Z" fill="#9D9EA2" />
<text x="1658" y="787.3" font-size="20" fill="#A0A0A3" font-weight="700" textLength="160.8" lengthAdjust="spacingAndGlyphs" >PivotTable Areas</text>
<text x="1643" y="819" font-size="17" fill="#A9ABAF" textLength="255.5" lengthAdjust="spacingAndGlyphs" >Drag fields between areas below</text>
<line x1="2039.5" y1="228.6" x2="2068.9" y2="228.6" stroke="#D0D3D9" stroke-width="1.3" />
<line x1="2039.5" y1="233.5" x2="2068.9" y2="233.5" stroke="#D0D3D9" stroke-width="1.3" />
<rect x="2044.2" y="268" width="3.1" height="3.2" fill="none" rx="1" stroke="#9C9DA1" stroke-width="1.4" />
<rect x="2050.3" y="268" width="13.9" height="3.2" fill="none" rx="1.2" stroke="#9C9DA1" stroke-width="1.4" />
<rect x="2044.2" y="274.4" width="3.1" height="13.3" fill="none" rx="1" stroke="#9C9DA1" stroke-width="1.4" />
<path d="M2062.3,275.6V285Q2062.3,286.2 2061.1,286.2H2051.6 M2058.9,279L2062.3,275.6L2065.7,279 M2054.8,283L2051.6,286.2L2054.8,289.4" fill="none" stroke="#9C9DA1" stroke-width="1.4" />
<path d="M2046.8,321.5L2063.8,334.6L2056.2,335.6L2060.7,341.6L2057.6,343.2L2053.7,337.3L2048.6,342Z" fill="none" stroke="#2F3542" stroke-width="1.5" stroke-linejoin="round"/>
<circle cx="2045" cy="379.2" r="2.7" fill="none" stroke="#A4A7AD" stroke-width="1.3" />
<line x1="2047.7" y1="379.2" x2="2066" y2="379.2" stroke="#A4A7AD" stroke-width="1.3" />
<circle cx="2059.2" cy="392.6" r="2.7" fill="none" stroke="#A4A7AD" stroke-width="1.3" />
<line x1="2042" y1="392.6" x2="2056.5" y2="392.6" stroke="#A4A7AD" stroke-width="1.3" />
<line x1="2061.9" y1="392.6" x2="2066" y2="392.6" stroke="#A4A7AD" stroke-width="1.3" />
<path d="M2045.3,439.5A10,10 0 1 1 2050.3,448.2 M2042.6,437.9L2045.3,441.2L2048.2,438.1 M2055.3,434V440.5H2059.6" fill="none" stroke="#2F3542" stroke-width="1.5" />
<circle cx="2053.5" cy="494.8" r="10.8" fill="none" stroke="#2F3542" stroke-width="1.5" />
<path d="M2049.8,491.8Q2049.8,487.8 2053.6,487.8Q2057.3,487.8 2057.3,491.3Q2057.3,493.5 2054.8,494.8Q2053.6,495.5 2053.6,497.5V499" fill="none" stroke="#2F3542" stroke-width="1.5" />
<circle cx="2053.6" cy="502.2" r="0.9" fill="#2F3542" />
</svg>
</body></html>
